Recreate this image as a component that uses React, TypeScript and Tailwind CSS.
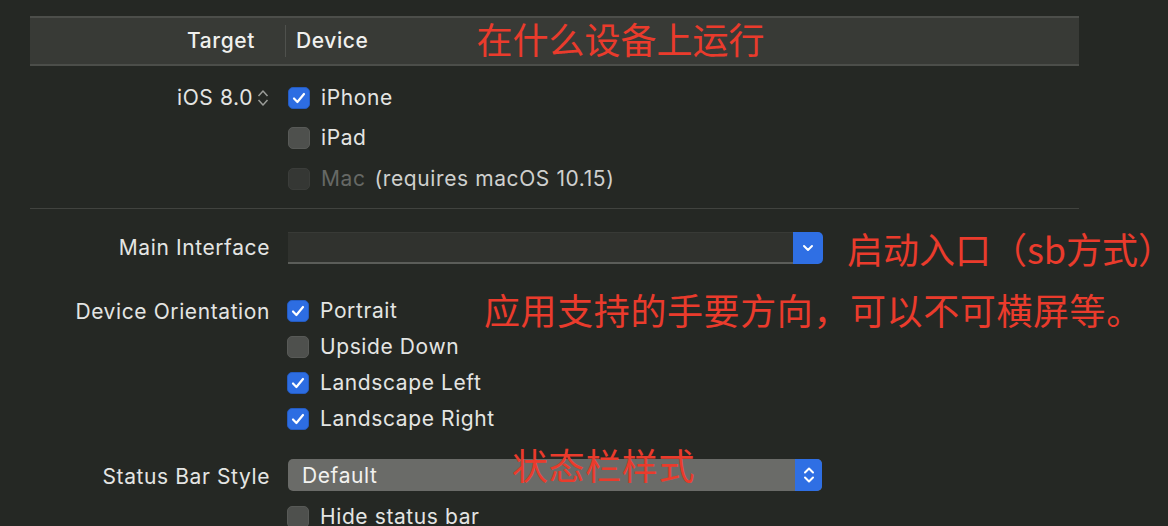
import React from 'react';

const ui = { fontFamily: 'Inter, "Liberation Sans", sans-serif' };
const cjk = { fontFamily: '"Noto Sans CJK SC", sans-serif' };

const Check: React.FC<{ state: 'on' | 'off' | 'disabled' }> = ({ state }) => {
  if (state === 'on') {
    return (
      <div className="w-[22px] h-[22px] rounded-[5px] bg-[#2d6de2] border border-[#245bc0] flex items-center justify-center shrink-0">
        <svg width="14" height="12" viewBox="0 0 14 12" fill="none">
          <path d="M2 6.5 L5.4 10 L12 2" stroke="white" strokeWidth="2.2" strokeLinecap="round" strokeLinejoin="round" />
        </svg>
      </div>
    );
  }
  if (state === 'disabled') {
    return <div className="w-[22px] h-[22px] rounded-[5px] bg-[#353734] border border-[#3b3d3a] shrink-0" />;
  }
  return <div className="w-[22px] h-[22px] rounded-[5px] bg-[#4e504d] border border-[#585a57] shrink-0" />;
};

const CheckRow: React.FC<{ state: 'on' | 'off' | 'disabled'; label: string; h: string; children?: React.ReactNode }> = ({ state, label, h, children }) => (
  <div className={`flex items-center gap-[11px] ${h}`}>
    <Check state={state} />
    <span className={state === 'disabled' ? 'text-[#666865]' : 'text-[#e4e5e3]'}>{label}</span>
    {children}
  </div>
);

const Row: React.FC<{ label?: React.ReactNode; className?: string; children: React.ReactNode }> = ({ label, className = '', children }) => (
  <div className={`flex ${className}`}>
    <div className="w-[240px] shrink-0 flex justify-end items-center h-full pt-[4px] text-[#e4e5e3]">{label}</div>
    <div className="pl-[18px] flex-1">{children}</div>
  </div>
);

export default function App() {
  return (
    <div className="w-[1168px] h-[526px] overflow-hidden bg-[#252824] relative text-[21px] tracking-[0.6px]" style={ui}>
      <div className="ml-[30px] w-[1138px]">
        {/* header */}
        <div className="mt-[16px] w-[1049px] h-[50px] bg-[#383a36] border-t-2 border-b-2 border-[#4c4e4a] flex items-center">
          <div className="w-[225px] text-right text-[#f0f0ee] font-medium">Target</div>
          <div className="ml-[30px] w-px h-[32px] bg-[#4f514d]" />
          <div className="pl-[10px] text-[#f0f0ee] font-medium">Device</div>
          <div className="ml-[108px] -mt-[6px] text-[36px] tracking-normal text-[#ea3b2c] leading-none" style={cjk}>在什么设备上运行</div>
        </div>

        {/* deployment */}
        <div className="mt-[10px] pt-[2px]">
          <div className="flex h-[40px]">
            <div className="w-[240px] flex justify-end items-center gap-[3px] text-[#e4e5e3]">
              <span>iOS 8.0</span>
              <svg width="14" height="20" viewBox="0 0 14 20" fill="none">
                <path d="M2.5 8 L7 3 L11.5 8" stroke="#9a9c98" strokeWidth="1.5" strokeLinejoin="round" />
                <path d="M2.5 12 L7 17 L11.5 12" stroke="#9a9c98" strokeWidth="1.5" strokeLinejoin="round" />
              </svg>
            </div>
            <div className="pl-[18px]">
              <CheckRow state="on" label="iPhone" h="h-[40px]" />
            </div>
          </div>
          <div className="pl-[258px]">
            <CheckRow state="off" label="iPad" h="h-[40px]" />
            <CheckRow state="disabled" label="Mac" h="h-[42px]">
              <span className="text-[#cfd0ce] -ml-[2px]">(requires macOS 10.15)</span>
            </CheckRow>
          </div>
        </div>

        <div className="mt-[8px] w-[1049px] h-px bg-[#41433f]" />

        {/* main interface */}
        <Row label="Main Interface" className="mt-[21px] h-[32px]">
          <div className="flex items-center">
            <div className="w-[535px] h-[32px] flex shrink-0">
              <div className="flex-1 bg-[#30322e] border-t border-[#383a36] border-b-2 border-b-[#5b5d59]" />
              <div className="w-[30px] h-[32px] bg-[#2f6fe4] rounded-r-[5px] flex items-center justify-center">
                <svg width="12" height="8" viewBox="0 0 12 8" fill="none">
                  <path d="M2 2 L6 6 L10 2" stroke="white" strokeWidth="2" strokeLinecap="round" strokeLinejoin="round" />
                </svg>
              </div>
            </div>
            <span className="ml-[24px] text-[36px] tracking-normal text-[#ea3b2c] leading-none whitespace-nowrap" style={cjk}>启动入口（sb方式）</span>
          </div>
        </Row>

        {/* orientation */}
        <div className="mt-[31px] flex">
          <div className="w-[240px] h-[36px] pt-[2px] flex justify-end items-center text-[#e4e5e3]">Device Orientation</div>
          <div className="pl-[17px]">
            <CheckRow state="on" label="Portrait" h="h-[36px]" />
            <CheckRow state="off" label="Upside Down" h="h-[36px]" />
            <CheckRow state="on" label="Landscape Left" h="h-[36px]" />
            <CheckRow state="on" label="Landscape Right" h="h-[36px]" />
          </div>
        </div>

        {/* status bar */}
        <Row label="Status Bar Style" className="mt-[22px] h-[32px]">
          <div className="w-[534px] h-[32px] rounded-[5px] bg-[#6a6b68] flex items-center overflow-hidden">
            <span className="flex-1 pl-[14px] pt-[2px] text-[#f2f2f0]">Default</span>
            <div className="w-[27px] h-full bg-[#2f6fe4] flex items-center justify-center">
              <svg width="14" height="22" viewBox="0 0 14 22" fill="none">
                <path d="M3 8.5 L7 4.5 L11 8.5" stroke="white" strokeWidth="2" strokeLinecap="round" strokeLinejoin="round" />
                <path d="M3 13.5 L7 17.5 L11 13.5" stroke="white" strokeWidth="2" strokeLinecap="round" strokeLinejoin="round" />
              </svg>
            </div>
          </div>
        </Row>

        <div className="mt-[8px] pl-[257px]">
          <CheckRow state="off" label="Hide status bar" h="h-[36px]" />
        </div>
      </div>

      {/* annotations */}
      <div className="absolute left-[484px] top-[291px] text-[36px] text-[#ea3b2c] leading-none whitespace-nowrap" style={cjk}>应用支持的手要方向，可以不可横屏等。</div>
      <div className="absolute left-[512px] top-[446px] text-[36px] text-[#ea3b2c] leading-none whitespace-nowrap" style={cjk}>状态栏样式</div>
    </div>
  );
}
